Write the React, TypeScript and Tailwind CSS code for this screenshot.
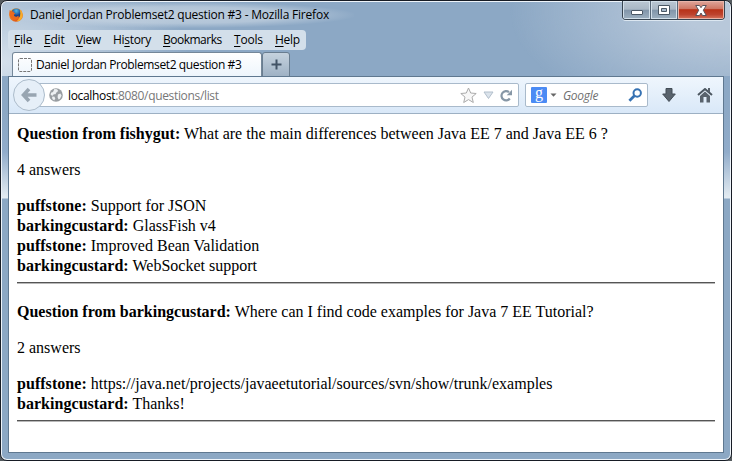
import type { ReactNode } from "react";

type Answer = { user: string; text: string };

function Question({ user, text, answers }: { user: string; text: string; answers: Answer[] }) {
  return (
    <article>
      <p><b>Question from {user}:</b> {text}</p>
      <p className="my-4">{answers.length} answers</p>
      {answers.map((a, i) => (
        <p key={i}><b className="tracking-[0.04px]">{a.user}:</b> {a.text}</p>
      ))}
      <hr className="mt-[6px] mb-[18px] h-0.5 border-t border-b border-t-[#555] border-b-[#b8b8b8]" />
    </article>
  );
}

function MenuItem({ k, before = "", after, className }: { k: string; before?: string; after: string; className: string }) {
  return <span className={`block shrink-0 ${className}`}>{before}<span className="underline underline-offset-2">{k}</span>{after}</span>;
}

function WindowButton({ children, className }: { children: ReactNode; className: string }) {
  return <div className={`flex h-[18px] items-center justify-center ${className}`}>{children}</div>;
}

function FirefoxLogo() {
  return (
    <svg width="14" height="14" viewBox="0 0 14 14" className="shrink-0">
      <defs>
        <linearGradient id="fox" x1="0" y1="0" x2="1" y2="1"><stop stopColor="#f7b52c" /><stop offset=".5" stopColor="#ee731f" /><stop offset="1" stopColor="#c93812" /></linearGradient>
        <radialGradient id="globe" cx=".5" cy=".25"><stop stopColor="#52bbe8" /><stop offset="1" stopColor="#17418a" /></radialGradient>
      </defs>
      <circle cx="7" cy="7" r="6.8" fill="url(#fox)" />
      <circle cx="7.3" cy="5.3" r="4.9" fill="url(#globe)" />
      <path d="M.7 2 2.6 3.4 4.8 3.3 4.5 4.6 6.3 5.6 4.9 6.7 5.3 8C6.8 9.2 8.5 8.5 9.5 7.4L9.8 11C5 13.5 0 10 .3 5Z" fill="#ec6a1c" />
      <path d="M10.7 1.2C14.8 4.2 14.6 10 10.8 12.7L7 13.5C11.2 10.8 12 6.5 10.7 1.2Z" fill="#f9ad28" />
    </svg>
  );
}

function Globe() {
  return (
    <svg width="14" height="14" viewBox="0 0 14 14" className="shrink-0">
      <circle cx="7" cy="7" r="6.8" fill="#999ea2" />
      <path d="M5.4 1 8 1.2 9.2 3 7.4 4.5 6.5 6.3 4.8 6.2 3.6 7.7 1.7 7 2 4.8 4 4Z M8.9 6.4 11.3 5.4 12.6 7.5 11 10.7 9.6 11.5 8.6 9.3Z M3 8.7 5.3 8.6 6.3 10.6 5.2 12.4 3.4 11Z" fill="#edf0f2" />
    </svg>
  );
}

export default function App() {
  return (
    <main className="h-[461px] w-[732px] overflow-hidden bg-[#555b5f] font-['Open_Sans','Noto_Sans',sans-serif] text-[12px] text-black">
      <div className="h-full rounded-[7px] border border-[#171c25] bg-[#eef4fa] p-px">
        <div className="flex h-full flex-col rounded-[5px] bg-[linear-gradient(#8ca8c5_0px,#8ca8c5_110px,#91acca_150px,#e4ecf2_196px,#8ca8c4_197px)] px-1.5 pb-1.5">
          <div className="-mx-1.5 h-[74px] shrink-0 rounded-t-[5px] bg-[radial-gradient(ellipse_190px_110px_at_0px_60px,#d5e0eb_0%,transparent_100%),radial-gradient(ellipse_220px_110px_at_100%_10px,#b8c8da_20%,transparent_100%)] px-1.5">
            <header className="flex h-[28px] justify-between">
              <div className="flex h-[26px] w-[346px] items-center gap-[7px] pl-px bg-[radial-gradient(ellipse_at_center,#c9d6e3d0_0%,#c9d6e3a0_45%,transparent_72%)]">
                <FirefoxLogo />
                <h1 className="whitespace-nowrap tracking-[-0.21px]">Daniel Jordan Problemset2 question #3 - Mozilla Firefox</h1>
              </div>
              <div className="-mt-px -mr-px flex h-[19px] overflow-hidden rounded-b-[4px] border border-t-0 border-[#384551] shadow-[0_1px_0_#dce7f1]">
                <WindowButton className="w-[28px] border-r border-[#586878] bg-[linear-gradient(#bac7d3,#a9b7c5_46%,#8195a9_50%,#9db0c0)] shadow-[inset_0_0_0_1px_#d2dfe9]">
                  <i className="mt-[5px] h-[5px] w-3 rounded-[1px] border border-[#4b5865] bg-white" />
                </WindowButton>
                <WindowButton className="w-[27px] border-r border-[#586878] bg-[linear-gradient(#bac7d3,#a9b7c5_46%,#8195a9_50%,#9db0c0)] shadow-[inset_0_0_0_1px_#d2dfe9]">
                  <svg width="12" height="10"><path d="M.5.5h11v9H.5z" fill="#fff" stroke="#4b5865" /><path d="M3.5 3.5h5v3h-5z" fill="#a8bacb" stroke="#4b5865" /></svg>
                </WindowButton>
                <WindowButton className="w-[46px] bg-[linear-gradient(#dfa69b,#ce7663_44%,#b83218_48%,#bd432e_75%,#d7765e)] shadow-[inset_0_0_0_1px_#e9b4a8]">
                  <svg width="12" height="11" viewBox="0 0 12 11"><path d="M.7.5h3.8L6 2.7 7.5.5h3.8L8.3 5.2l3 5.3H7.5L6 8l-1.5 2.5H.7l3-5.3Z" fill="white" stroke="#59545c" /></svg>
                </WindowButton>
              </div>
            </header>
            <nav className="flex h-[20px] w-[298px] items-center rounded-[4px] bg-[#d3dfea] pl-[6px]">
              <MenuItem k="F" after="ile" className="w-[30px] tracking-[-0.2px]" />
              <MenuItem k="E" after="dit" className="w-[32px] tracking-[-0.2px]" />
              <MenuItem k="V" after="iew" className="w-[37px] tracking-[-0.4px]" />
              <MenuItem before="Hi" k="s" after="tory" className="w-[50px] tracking-[-0.3px]" />
              <MenuItem k="B" after="ookmarks" className="w-[71px] tracking-[-0.5px]" />
              <MenuItem k="T" after="ools" className="w-[41px] tracking-[-0.2px]" />
              <MenuItem k="H" after="elp" className="w-[28px] tracking-[-0.3px]" />
            </nav>
            <div className="mt-[2px] flex h-[25px] pl-[4px]">
              <div className="flex h-[25px] w-[250px] items-center gap-[4px] rounded-t-[3px] border border-b-0 border-[#748799] bg-gradient-to-b from-white to-[#edf5fc] pl-[5px]">
                <svg width="14" height="14" className="shrink-0"><rect x=".5" y=".5" width="13" height="13" rx="1.5" fill="none" stroke="#777" strokeDasharray="3 1" /></svg>
                <span className="whitespace-nowrap tracking-[-0.38px]">Daniel Jordan Problemset2 question #3</span>
              </div>
              <div className="flex h-[25px] w-[28px] items-center justify-center rounded-t-[3px] border border-[#697d90] bg-gradient-to-b from-[#c5d2de] to-[#9fb2c5]">
                <svg width="11" height="11"><path d="M5.5 .5v10M.5 5.5h10" stroke="#415366" strokeWidth="2" /></svg>
              </div>
            </div>
          </div>
          <section className="flex min-h-0 flex-1 flex-col border border-[#5f7890] bg-white">
            <div className="flex h-[37px] shrink-0 items-center border-b border-[#9db0c3] bg-gradient-to-b from-[#eff6fd] to-[#d9e8f8] pl-1">
              <div className="relative z-10 flex size-[32px] shrink-0 items-center justify-center rounded-full border border-[#acbccb] bg-[#e6eff8]">
                <svg width="16" height="16" viewBox="0 0 16 16"><path d="M8 2 2.5 8 8 14M3 8h12.5" fill="none" stroke="#98a5b1" strokeWidth="3.6" /></svg>
              </div>
              <div className="-ml-2 flex h-6 w-[482px] items-center rounded-[2px] border border-[#a9bacb] bg-white pl-[11px]">
                <Globe />
                <div className="ml-[5px] flex-1 whitespace-nowrap pt-px tracking-[-0.34px] text-[#777]"><span className="text-black">localhost</span>:8080/questions/list</div>
                <svg width="17" height="17" viewBox="0 0 17 17"><path d="m8.5 1 2.2 5 5.5.5-4.2 3.6 1.3 5.4-4.8-2.9-4.8 2.9L5 10.1.8 6.5 6.3 6Z" fill="#f7f7f7" stroke="#aaa" /></svg>
                <svg className="ml-[6px]" width="11" height="9" viewBox="0 0 11 9"><path d="M1 1h9L5.5 7.5Z" fill="#dbe3eb" stroke="#b2bfcc" /></svg>
                <svg className="mr-[5px] ml-[6px]" width="13" height="13" viewBox="0 0 13 13"><path d="M9.8 9.5A4.6 4.6 0 1 1 9 3.2" fill="none" stroke="#8797a6" strokeWidth="2.2" /><path d="M6.7 6.3H12V.8Z" fill="#8797a6" /></svg>
              </div>
              <div className="ml-[6px] flex h-6 w-[123px] items-center rounded-[2px] border border-[#a9bacb] bg-white px-1">
                <div className="ml-px flex size-4 items-center justify-center rounded-[1px] bg-[#4b8bf4]">
                  <span className="mt-[-4px] font-['Liberation_Serif',serif] text-[16px] leading-4 text-white">g</span>
                </div>
                <svg className="ml-[3px]" width="7" height="4"><path d="M.5.5h6L3.5 3.8Z" fill="#666" /></svg>
                <span className="ml-[6px] flex-1 pt-px tracking-[-0.3px] text-[#707070] italic">Google</span>
                <svg width="15" height="15" viewBox="0 0 15 15"><circle cx="9.2" cy="5" r="3.7" fill="none" stroke="#3672b3" strokeWidth="2" /><path d="m6.4 7.8-5 5" stroke="#3672b3" strokeWidth="2.8" /></svg>
              </div>
              <svg className="ml-[14px]" width="14" height="14" viewBox="0 0 14 14"><path d="M4 .5h6V6h3.3L7 13.5.7 6H4Z" fill="#59636d" stroke="#424c56" /></svg>
              <svg className="ml-[21px]" width="16" height="15" viewBox="0 0 16 15"><path d="M3 8v6.5h3.5V9h3v5.5H13V8L8 3.5Z" fill="#59636d" /><path d="m1 7 7-6 7 6" fill="none" stroke="#4c5761" strokeWidth="2" /><path d="M11 0h2v4h-2z" fill="#59636d" /></svg>
            </div>
            <div className="flex-1 px-2 pt-[10px] font-['Liberation_Serif',serif] text-[16px] leading-5">
              <Question user="fishygut" text="What are the main differences between Java EE 7 and Java EE 6 ?" answers={[
                { user: "puffstone", text: "Support for JSON" },
                { user: "barkingcustard", text: "GlassFish v4" },
                { user: "puffstone", text: "Improved Bean Validation" },
                { user: "barkingcustard", text: "WebSocket support" },
              ]} />
              <Question user="barkingcustard" text="Where can I find code examples for Java 7 EE Tutorial?" answers={[
                { user: "puffstone", text: "https://java.net/projects/javaeetutorial/sources/svn/show/trunk/examples" },
                { user: "barkingcustard", text: "Thanks!" },
              ]} />
            </div>
          </section>
        </div>
      </div>
    </main>
  );
}
